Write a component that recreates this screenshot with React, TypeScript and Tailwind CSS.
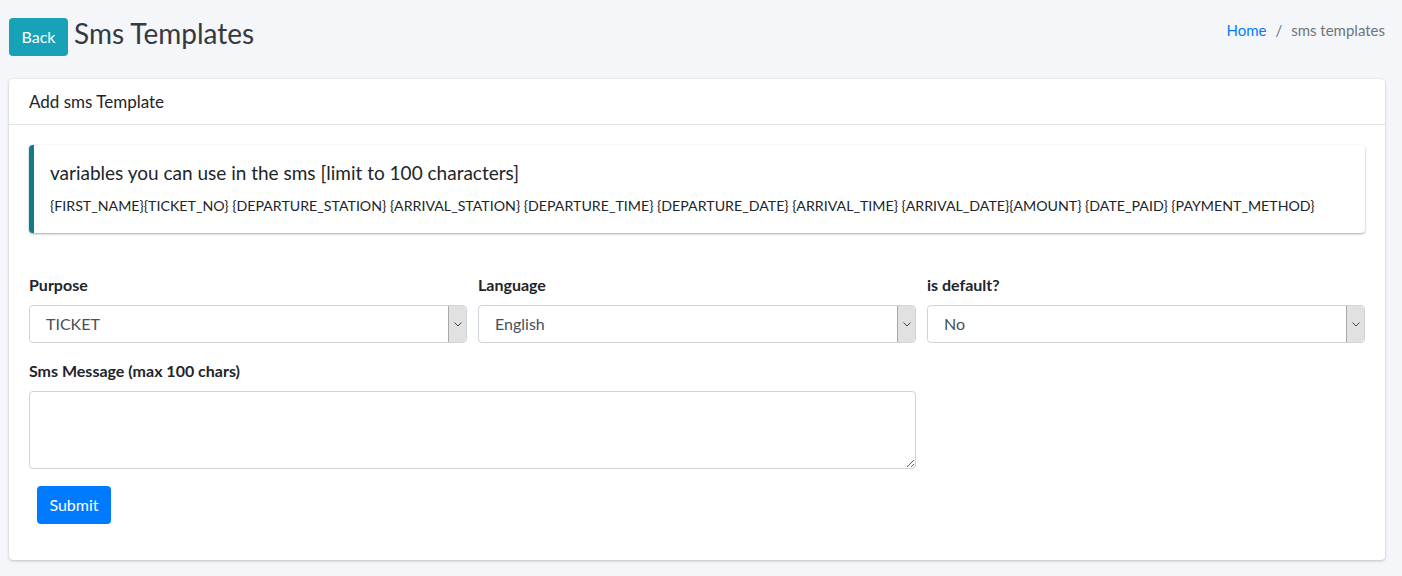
import React from 'react';

const font = { fontFamily: 'Lato, "Noto Sans", sans-serif' };

function SelectBox({ value }: { value: string }) {
  return (
    <div className="relative h-[38px] rounded border border-[#ced4da] bg-white">
      <div className="flex h-full items-center pl-[16px] text-[16px] text-[#495057]">{value}</div>
      {/* native-looking dropdown button */}
      <div className="absolute right-0 top-0 flex h-full w-[18px] items-center justify-center rounded-r border-l border-[#a8a8a8] bg-[#e1e1e1]">
        <svg width="8" height="5" viewBox="0 0 8 5" fill="none">
          <path d="M0.5 0.5 L4 4 L7.5 0.5" stroke="#444" strokeWidth="1" />
        </svg>
      </div>
    </div>
  );
}

export default function App() {
  return (
    <div className="min-h-[576px] bg-[#f4f6f9] text-[#212529]" style={font}>
      {/* Header */}
      <div className="flex items-start justify-between pl-[9px] pr-[17px] pt-[18px]">
        <div className="flex items-start gap-[6px]">
          <button className="h-[38px] w-[59px] rounded bg-[#17a2b8] text-[16px] text-white">Back</button>
          <h1 className="text-[28px] leading-[30px] text-[#343a40]">Sms Templates</h1>
        </div>
        <div className="flex items-center text-[15px] leading-[24px]">
          <span className="text-[#007bff]">Home</span>
          <span className="px-[9px] text-[#6c757d]">/</span>
          <span className="text-[#6c757d]">sms templates</span>
        </div>
      </div>

      {/* Card */}
      <div className="ml-[9px] mr-[17px] mt-[23px] rounded bg-white shadow-[0_0_1px_rgba(0,0,0,0.125),0_1px_3px_rgba(0,0,0,0.2)]">
        <div className="flex h-[46px] items-center border-b border-[#dee2e6] px-[20px] text-[17px]">
          Add sms Template
        </div>
        <div className="px-[20px] pb-[36px] pt-[20px]">
          <div className="rounded border-l-[5px] border-[#117a8b] bg-white px-[16px] pt-[14px] pb-[16px] shadow-[0_1px_3px_rgba(0,0,0,0.12),0_1px_2px_rgba(0,0,0,0.24)]">
            <h5 className="text-[19px] leading-[28px]">variables you can use in the sms [limit to 100 characters]</h5>
            <p className="mt-[8px] whitespace-nowrap text-[14.2px] leading-[22px]">
              {'{FIRST_NAME}{TICKET_NO} {DEPARTURE_STATION} {ARRIVAL_STATION} {DEPARTURE_TIME} {DEPARTURE_DATE} {ARRIVAL_TIME} {ARRIVAL_DATE}{AMOUNT} {DATE_PAID} {PAYMENT_METHOD}'}
            </p>
          </div>

          <div className="mt-[40px] grid grid-cols-3 gap-x-[11px]">
            <div>
              <label className="mb-[8px] block text-[16px] font-bold leading-[24px]">Purpose</label>
              <SelectBox value="TICKET" />
            </div>
            <div>
              <label className="mb-[8px] block text-[16px] font-bold leading-[24px]">Language</label>
              <SelectBox value="English" />
            </div>
            <div>
              <label className="mb-[8px] block text-[16px] font-bold leading-[24px]">is default?</label>
              <SelectBox value="No" />
            </div>
            <div className="col-span-2 mt-[16px]">
              <label className="mb-[8px] block text-[16px] font-bold leading-[24px]">Sms Message (max 100 chars)</label>
              <textarea className="block h-[78px] w-full rounded border border-[#ced4da] bg-white" />
            </div>
          </div>

          <button className="ml-[8px] mt-[17px] h-[38px] w-[74px] rounded bg-[#007bff] text-[16px] text-white">Submit</button>
        </div>
      </div>
    </div>
  );
}
